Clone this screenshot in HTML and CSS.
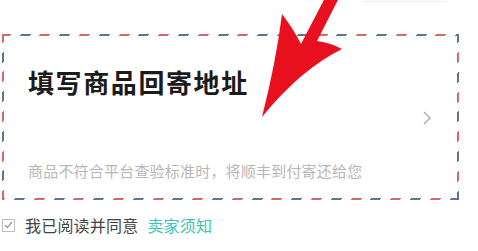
FILE: index.html
```html
<!DOCTYPE html>
<html lang="zh-CN">
<head>
    <meta charset="UTF-8">
    <meta name="viewport" content="width=device-width, initial-scale=1.0">
    <title>填写商品回寄地址</title>
    <link rel="stylesheet" href="styles.css">
</head>
<body>
    <div class="page">
        <div class="topbar">
            <span class="top-btn"></span>
        </div>

        <div class="card">
            <h2 class="card-title">填写商品回寄地址</h2>
            <svg class="chevron" width="10" height="14" viewBox="0 0 10 14">
                <polyline points="2,1 8,7 2,13" fill="none" stroke="#a9a9a9" stroke-width="1.3"/>
            </svg>
            <p class="card-note">商品不符合平台查验标准时，将顺丰到付寄还给您</p>
        </div>

        <label class="agree">
            <span class="checkbox">
                <svg width="9" height="8" viewBox="0 0 9 8">
                    <polyline points="1,4 3.5,6.5 8,1" fill="none" stroke="#9a9a9a" stroke-width="1.2"/>
                </svg>
            </span>
            <span class="agree-text">我已阅读并同意</span>
            <a href="#" class="agree-link">卖家须知</a>
        </label>

        <!-- annotation arrow drawn over the page -->
        <svg class="arrow" width="478" height="251" viewBox="0 0 478 251">
            <path d="M326 -4 L340 -4 L317 41 Q331 43 342 49 Q300 70 262 117 Q276 62 282 14 Q294 30 301 44 Z" fill="#e8101e"/>
        </svg>
    </div>
</body>
</html>
```

FILE: styles.css
```css
body {
    margin: 0;
    padding: 0;
    background-color: #fff;
    font-family: "Noto Sans CJK SC", "Noto Sans", sans-serif;
}
.page {
    position: relative;
    width: 478px;
    height: 251px;
    overflow: hidden;
}
.topbar {
    height: 2px;
    display: flex;
}
.top-btn {
    margin-left: 363px;
    width: 84px;
    height: 1px;
    border-bottom: 1px solid #ececec;
}
.card {
    margin: 32px 0 0 2px;
    width: 457px;
    height: 166px;
    box-sizing: border-box;
    padding: 33px 25px 19px 24px;
    display: flex;
    flex-direction: column;
    border: 2px solid transparent;
    background:
        linear-gradient(#fff, #fff) padding-box,
        repeating-linear-gradient(-45deg, #5b7592 0 7px, transparent 7px 14px, #d4666d 14px 21px, transparent 21px 28px) border-box;
}
.card-title {
    margin: 0;
    font-size: 26px;
    line-height: 26px;
    font-weight: 700;
    letter-spacing: 1.6px;
    color: #1b1b1b;
}
.chevron {
    align-self: flex-end;
    margin-top: 16px;
}
.card-note {
    margin: auto 0 0 0;
    font-size: 15px;
    line-height: 16px;
    letter-spacing: 0.2px;
    color: #b6b6b6;
}
.agree {
    display: flex;
    align-items: center;
    margin: 15px 0 0 2px;
    height: 20px;
    font-size: 16px;
}
.checkbox {
    width: 11px;
    height: 11px;
    border: 1px solid #bdbdbd;
    display: flex;
    align-items: center;
    justify-content: center;
    margin-right: 10px;
}
.agree-text {
    color: #444;
    letter-spacing: 0.2px;
}
.agree-link {
    margin-left: 9px;
    color: #3dc3b4;
    text-decoration: none;
    letter-spacing: 0.2px;
}
.arrow {
    position: absolute;
    top: 0;
    left: 0;
    pointer-events: none;
}
```
